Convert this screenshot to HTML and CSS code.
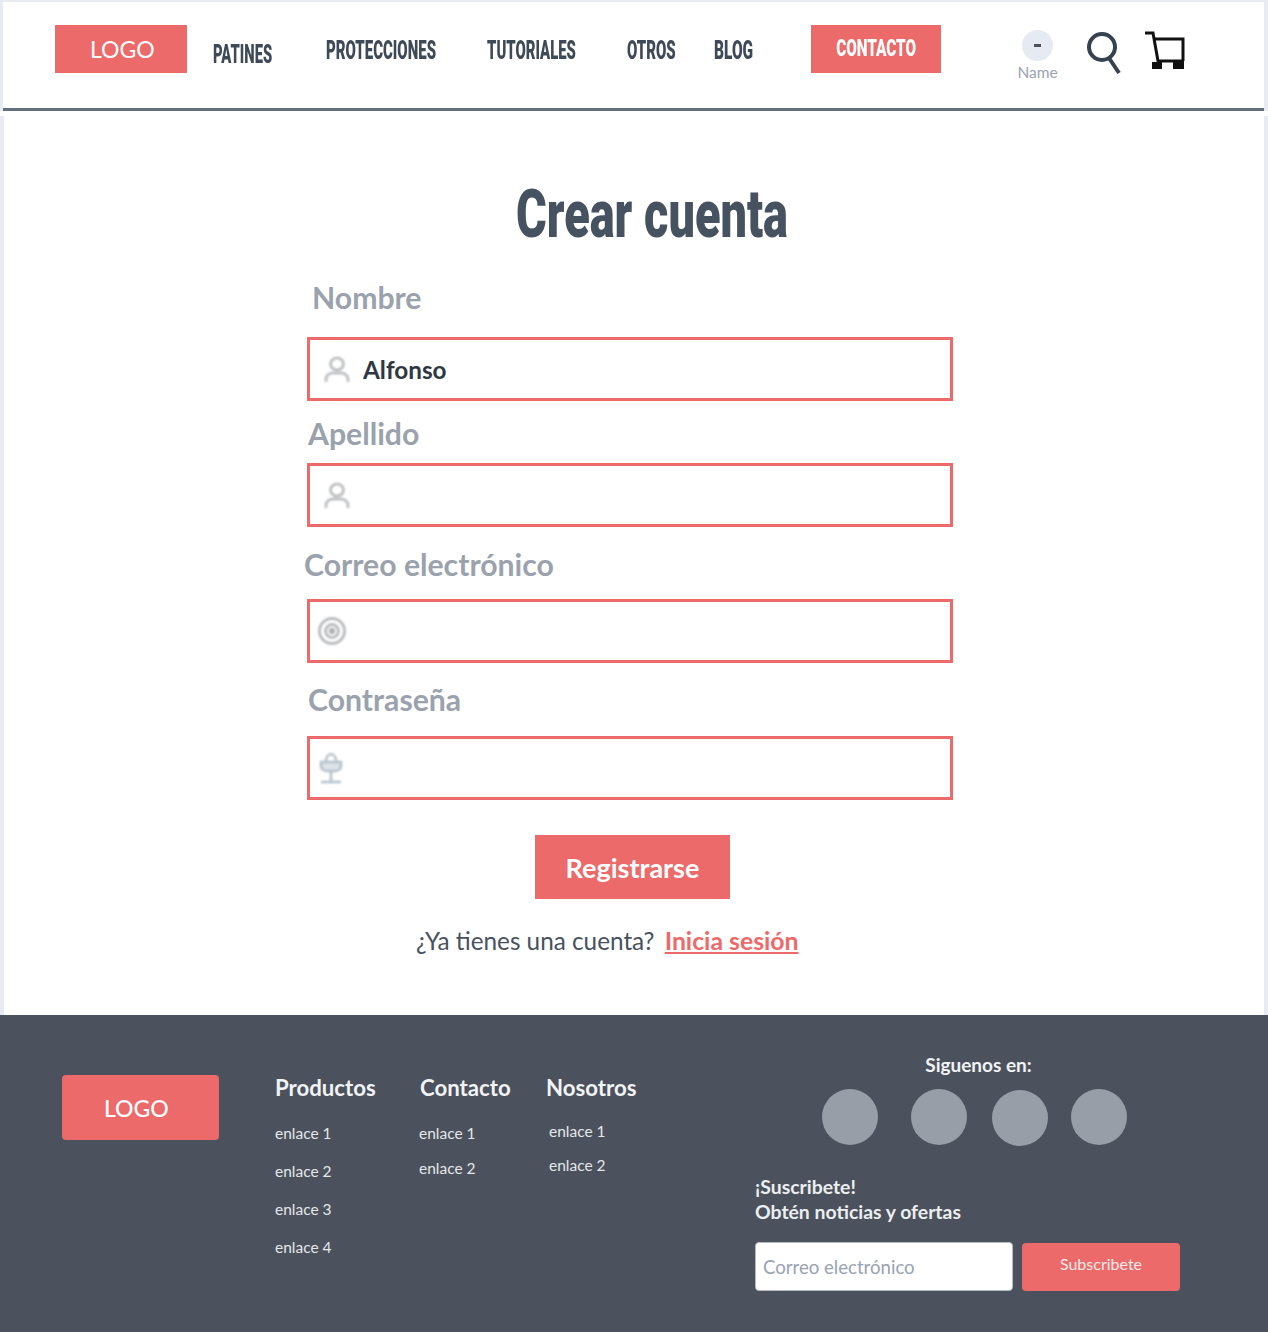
FILE: index.html
```html
<!DOCTYPE html>
<html lang="es">
<head>
<meta charset="utf-8">
<title>Crear cuenta</title>
<link rel="stylesheet" href="styles.css">
</head>
<body>
<header class="header">
  <a class="logo" href="#">LOGO</a>
  <nav class="nav">
    <a class="nav-link patines" href="#">PATINES</a>
    <a class="nav-link protecciones" href="#">PROTECCIONES</a>
    <a class="nav-link tutoriales" href="#">TUTORIALES</a>
    <a class="nav-link otros" href="#">OTROS</a>
    <a class="nav-link blog" href="#">BLOG</a>
  </nav>
  <a class="contact" href="#"><span class="contact-text">CONTACTO</span></a>
  <div class="user">
    <span class="avatar"><span class="avatar-dash"></span></span>
    <span class="user-name">Name</span>
  </div>
  <svg class="search" width="36" height="46" viewBox="0 0 36 46" fill="none" stroke="#36424f">
    <circle cx="15" cy="18" r="13" stroke-width="4"/>
    <path d="M22 29l10 15" stroke-width="4"/>
  </svg>
  <svg class="cart" width="42" height="40" viewBox="0 0 42 40" fill="none" stroke="#111">
    <path d="M0 3h8l5 28h26" stroke-width="3"/>
    <path d="M9 9h29v22" stroke-width="3"/>
    <rect x="7" y="32" width="10" height="7" fill="#111" stroke="none"/>
    <rect x="28" y="32" width="11" height="7" fill="#111" stroke="none"/>
  </svg>
</header>
<div class="divider"></div>
<main class="main">
  <h1 class="title">Crear cuenta</h1>
  <form class="form">
    <label class="label label-nombre" for="nombre">Nombre</label>
    <div class="field">
      <svg class="icon" width="28" height="32" viewBox="0 0 28 32" fill="none" stroke="#b4b6b9" stroke-width="2.500">
        <ellipse cx="14" cy="10" rx="6.500" ry="6"/><path d="M3 28v-3c0-4 4-6 7-6h8c3 0 7 2 7 6v3"/>
      </svg>
      <input class="input" id="nombre" type="text" value="Alfonso">
    </div>
    <label class="label label-apellido" for="apellido">Apellido</label>
    <div class="field">
      <svg class="icon" width="28" height="32" viewBox="0 0 28 32" fill="none" stroke="#b4b6b9" stroke-width="2.500">
        <ellipse cx="14" cy="10" rx="6.500" ry="6"/><path d="M3 28v-3c0-4 4-6 7-6h8c3 0 7 2 7 6v3"/>
      </svg>
      <input class="input" id="apellido" type="text">
    </div>
    <label class="label label-correo" for="correo">Correo electrónico</label>
    <div class="field">
      <svg class="icon icon-mail" width="30" height="30" viewBox="0 0 30 30" fill="none" stroke="#aeb0b3" stroke-width="2.500">
        <circle cx="15" cy="15" r="12.500"/><circle cx="15" cy="15" r="6.500"/><circle cx="15" cy="15" r="2" fill="#aeb0b3"/>
      </svg>
      <input class="input" id="correo" type="email">
    </div>
    <label class="label label-pass" for="pass">Contraseña</label>
    <div class="field">
      <svg class="icon icon-lock" width="24" height="32" viewBox="0 0 24 32" fill="none" stroke="#b4c0ca" stroke-width="2.500">
        <path d="M7 9c0-9 10-9 10 0"/><path d="M2 10h20v4c0 3-3 5-6 5H8c-3 0-6-2-6-5z" fill="#dfe4e9"/><path d="M12 19v10M2 30h20"/>
      </svg>
      <input class="input" id="pass" type="password">
    </div>
    <button class="submit" type="button">Registrarse</button>
    <p class="signin">¿Ya tienes una cuenta? <a class="signin-link" href="#">Inicia sesión</a></p>
  </form>
</main>
<footer class="footer">
  <a class="footer-logo" href="#">LOGO</a>
  <div class="col col-productos">
    <h3 class="col-title">Productos</h3>
    <ul class="links">
      <li>enlace 1</li>
      <li>enlace 2</li>
      <li>enlace 3</li>
      <li>enlace 4</li>
    </ul>
  </div>
  <div class="col col-contacto">
    <h3 class="col-title">Contacto</h3>
    <ul class="links">
      <li>enlace 1</li>
      <li>enlace 2</li>
    </ul>
  </div>
  <div class="col col-nosotros">
    <h3 class="col-title">Nosotros</h3>
    <ul class="links">
      <li>enlace 1</li>
      <li>enlace 2</li>
    </ul>
  </div>
  <div class="aside">
    <p class="follow">Siguenos en:</p>
    <div class="social">
      <span class="dot"></span><span class="dot dot-b"></span><span class="dot dot-c"></span><span class="dot dot-d"></span>
    </div>
    <p class="sub-text">¡Suscribete!<br>Obtén noticias y ofertas</p>
    <div class="sub-row">
      <input class="sub-input" type="email" placeholder="Correo electrónico">
      <button class="sub-btn" type="button">Subscribete</button>
    </div>
  </div>
</footer>
</body>
</html>
```
FILE: styles.css
```css
* { box-sizing: border-box; }
html, body { margin: 0; padding: 0; }
body {
  background: #e9ebf3;
  font-family: "Lato", "Liberation Sans", sans-serif;
  height: 1332px;
  overflow: hidden;
  padding-top: 2px;
}
a { text-decoration: none; }

.header {
  display: flex;
  align-items: flex-start;
  margin-left: 3px;
  width: 1261px;
  height: 109px;
  padding: 23px 0 0 52px;
  background: #fff;
  border-bottom: 3px solid #656f7d;
}
.logo {
  width: 132px;
  height: 48px;
  background: #ec6a6a;
  color: #fff;
  font-size: 23px;
  line-height: 49px;
  padding-left: 35px;
}
.nav { display: flex; }
.nav-link {
  font-family: "Roboto", "Liberation Sans", sans-serif;
  font-weight: 900;
  color: #3f4a58;
  font-size: 25px;
  line-height: 26px;
  margin-top: 13px;
  display: block;
  white-space: nowrap;
  transform-origin: left center;
}
.patines { margin-left: 26px; margin-top: 17px; width: 59px; transform: scaleX(0.59); }
.protecciones { margin-left: 54px; width: 111px; transform: scaleX(0.6); }
.tutoriales { margin-left: 50px; width: 89px; transform: scaleX(0.595); }
.otros { margin-left: 51px; width: 49px; transform: scaleX(0.6); }
.blog { margin-left: 38px; width: 39px; transform: scaleX(0.62); }
.contact {
  margin-left: 58px;
  width: 130px;
  height: 48px;
  background: #ec6a6a;
  color: #fff;
  font-family: "Roboto", "Liberation Sans", sans-serif;
  font-weight: 900;
  font-size: 23px;
  line-height: 48px;
  text-align: center;
  white-space: nowrap;
}
.contact-text { display: inline-block; transform: scaleX(0.665); }
.user {
  margin-left: 76px;
  width: 41px;
  margin-top: 5px;
  display: flex;
  flex-direction: column;
  align-items: center;
}
.avatar {
  width: 31px;
  height: 31px;
  border-radius: 50%;
  background: #e6eaf2;
  display: flex;
  align-items: center;
  justify-content: center;
}
.avatar-dash { width: 7px; height: 3px; background: #4b525d; }
.user-name { color: #98a2b3; font-size: 15.500px; line-height: 18px; margin-top: 2px; }
.search { margin-left: 29px; margin-top: 4px; flex: none; }
.cart { margin-left: 22px; margin-top: 5px; flex: none; }

.divider { height: 5px; background: #fff; }

.main {
  margin-left: 4px;
  width: 1260px;
  height: 899px;
  background: #fff;
  padding-top: 59px;
}
.title {
  margin: 0 0 0 36px;
  text-align: center;
  font-family: "Roboto", "Liberation Sans", sans-serif;
  font-weight: 900;
  color: #475260;
  font-size: 67px;
  line-height: 78px;
  transform: scaleX(0.7);
}
.form { margin-left: 303px; width: 646px; display: flex; flex-direction: column; }
.label {
  display: block;
  color: #99a2ad;
  font-size: 30.200px;
  font-weight: 700;
  line-height: 36px;
}
.label-nombre { margin: 26px 0 22px 5px; }
.label-apellido { margin: 14px 0 12px 1px; }
.label-correo { margin: 19px 0 17px -3px; }
.label-pass { margin: 18px 0 19px 1px; }
.field {
  display: flex;
  align-items: center;
  height: 64px;
  border: 3px solid #ec6a6a;
  padding-left: 13px;
}
.icon { flex: none; filter: blur(0.8px); margin-top: 2px; }
.icon-mail { margin-left: -6px; margin-right: 7px; margin-top: 0; }
.icon-lock { margin-left: -4px; margin-right: 9px; margin-top: 0; }
.input {
  flex: 1;
  min-width: 0;
  border: 0;
  outline: 0;
  background: transparent;
  height: 100%;
  padding: 0 0 0 12px;
  font-family: inherit;
  font-size: 24.300px;
  font-weight: 700;
  color: #2d3844;
}
.submit {
  align-self: flex-start;
  margin: 35px 0 0 228px;
  width: 195px;
  height: 64px;
  border: 0;
  background: #ec6a6a;
  color: #fff;
  font-family: inherit;
  font-size: 27px;
  font-weight: 700;
}
.signin {
  margin: 25px 0 0 109px;
  color: #475260;
  font-size: 24.300px;
  line-height: 34px;
  white-space: nowrap;
}
.signin-link {
  margin-left: 4px;
  color: #ec6a6a;
  font-weight: 700;
  font-size: 24.800px;
  text-decoration: underline;
}

.footer {
  display: flex;
  align-items: flex-start;
  height: 317px;
  background: #4b525d;
  padding-left: 62px;
}
.footer-logo {
  width: 157px;
  height: 65px;
  margin-top: 60px;
  background: #ec6a6a;
  border-radius: 4px;
  color: #fff;
  font-size: 23px;
  font-weight: 500;
  line-height: 67px;
  padding-left: 42px;
}
.col { color: #fff; }
.col-title { margin: 0; font-size: 22.200px; font-weight: 700; line-height: 28px; color: #f2f3f5; }
.links { list-style: none; margin: 0; padding: 0; font-size: 15.500px; color: #e4e6ea; line-height: 20px; }
.col-productos { width: 145px; margin-left: 56px; margin-top: 59px; }
.col-productos .links { margin-top: 21px; display: flex; flex-direction: column; gap: 18px; }
.col-contacto { width: 126px; margin-top: 59px; }
.col-contacto .links { margin-top: 21px; margin-left: -1px; display: flex; flex-direction: column; gap: 15px; }
.col-nosotros { width: 209px; margin-top: 59px; }
.col-nosotros .links { margin-top: 19px; margin-left: 3px; display: flex; flex-direction: column; gap: 14px; }
.aside { width: 425px; }
.follow {
  margin: 38px 0 0 0;
  text-align: center;
  width: 447px;
  color: #f2f3f5;
  font-size: 19px;
  font-weight: 700;
  line-height: 24px;
}
.social { display: flex; margin: 12px 0 0 67px; align-items: flex-start; }
.dot { width: 56px; height: 56px; border-radius: 50%; background: #979ea8; }
.dot-b { margin-left: 33px; }
.dot-c { margin-left: 25px; margin-top: 1px; }
.dot-d { margin-left: 23px; }
.sub-text {
  margin: 28px 0 0 0;
  color: #eceef0;
  font-size: 19.400px;
  font-weight: 700;
  line-height: 25px;
}
.sub-row { display: flex; margin-top: 18px; align-items: flex-start; }
.sub-input {
  width: 258px;
  height: 49px;
  border: 1px solid #b5bac3;
  border-radius: 4px;
  background: #fff;
  padding: 0 7px;
  font-family: inherit;
  font-size: 18.600px;
  outline: 0;
}
.sub-input::placeholder { color: #98a2b3; opacity: 1; }
.sub-btn {
  margin: 1px 0 0 9px;
  width: 158px;
  height: 48px;
  border: 0;
  border-radius: 4px;
  background: #ec6a6a;
  color: #f7eaea;
  font-family: inherit;
  font-size: 16px;
  padding: 0 0 7px;
}
```
